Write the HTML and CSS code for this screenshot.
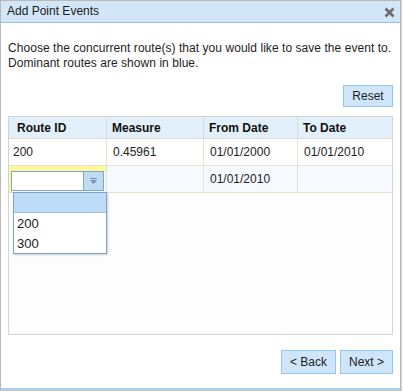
FILE: index.html
```html
<!DOCTYPE html>
<html lang="en">
  <head>
    <meta charset="UTF-8" />
    <title>Add Point Events</title>
    <link rel="stylesheet" href="styles.css">
  </head>
  <body>
    <div class="dialog">
      <div class="titlebar">
        <span class="title">Add Point Events</span>
        <svg class="close" width="11" height="11" viewBox="0 0 11 11">
          <path d="M1.5 1.5 L9.5 9.5 M9.5 1.5 L1.5 9.5" stroke="#6b6b6b" stroke-width="2.6" />
        </svg>
      </div>

      <div class="content">
        <p class="intro">
          Choose the concurrent route(s) that you would like to save the event to.
          Dominant routes are shown in blue.
        </p>

        <div class="toolbar">
          <button class="btn reset">Reset</button>
        </div>

        <div class="grid">
          <div class="row header">
            <div class="cell first">Route ID</div>
            <div class="cell">Measure</div>
            <div class="cell">From Date</div>
            <div class="cell">To Date</div>
          </div>
          <div class="row">
            <div class="cell first">200</div>
            <div class="cell">0.45961</div>
            <div class="cell">01/01/2000</div>
            <div class="cell">01/01/2010</div>
          </div>
          <div class="row alt">
            <div class="cell first editing">
              <div class="combo">
                <div class="combo-input"></div>
                <div class="combo-arrow">
                  <svg width="9" height="7" viewBox="0 0 9 7">
                    <rect x="1" y="0" width="7" height="1" fill="#7591ad" />
                    <path d="M1 2 L8 2 L4.5 6 Z" fill="#7591ad" />
                  </svg>
                </div>
              </div>
              <!-- open dropdown list -->
              <ul class="dropdown">
                <li class="selected">&nbsp;</li>
                <li>200</li>
                <li>300</li>
              </ul>
            </div>
            <div class="cell"></div>
            <div class="cell">01/01/2010</div>
            <div class="cell"></div>
          </div>
        </div>

        <div class="footer">
          <button class="btn back">&lt; Back</button>
          <button class="btn next">Next &gt;</button>
        </div>
      </div>
    </div>
  </body>
</html>
```

FILE: styles.css
```css
:root {
  --text-color: #222;
  --title-bg: #d2e6f8;
  --title-line: #8cc3ef;
  --btn-bg: #cfe5f9;
  --btn-border: #93c7f0;
  --row-line: #e8e0d3;
}
body {
  margin: 0;
  font-family: "Liberation Sans", Arial, sans-serif;
  font-size: 12px;
  color: var(--text-color);
  background: #fff;
}

.dialog {
  width: 399px;
  height: 390px;
  border: 1px solid #b9b9b9;
  border-bottom: none;
  box-shadow: 1px 0 0 #d4d4d4;
  display: flex;
  flex-direction: column;
  position: relative;
}
.dialog::after {
  content: "";
  position: absolute;
  left: 0;
  right: 0;
  bottom: 0;
  height: 2px;
  background: #a9d0f2;
  border-bottom: 1px solid #c8c8c8;
}

.titlebar {
  height: 21px;
  background: var(--title-bg);
  border-bottom: 1px solid var(--title-line);
  display: flex;
  align-items: center;
  justify-content: space-between;
  padding: 0 5px 0 6px;
}
.title {
  font-size: 12px;
  line-height: 15px;
  color: #1c1c1c;
}
.close {
  display: block;
  margin-top: 1px;
}

.content {
  flex: 1;
  display: flex;
  flex-direction: column;
  padding: 18px 7px 0 7px;
}
.intro {
  margin: 0;
  line-height: 15px;
  color: #1e1e1e;
  letter-spacing: 0.05px;
}

.toolbar {
  display: flex;
  justify-content: flex-end;
  margin-top: 14px;
}
.btn {
  font-family: "Liberation Sans", Arial, sans-serif;
  font-size: 12px;
  color: #1e1e1e;
  background: var(--btn-bg);
  border: 1px solid var(--btn-border);
  border-radius: 0;
  height: 22px;
  padding: 0;
  margin: 0;
}
.btn.reset {
  width: 50px;
}

.grid {
  margin-top: 9px;
  height: 217px;
  border: 1px solid #d3d3d3;
  background: #fdfdfd;
}
.row {
  display: grid;
  grid-template-columns: 98px 97px 94px 96px;
  height: 26px;
  background: #fff;
  border-bottom: 1px solid var(--row-line);
}
.row.header {
  height: 21px;
  background: #e2f0fb;
  font-weight: bold;
  color: #111;
  border-bottom: 1px solid #e2ddd3;
}
.row.alt {
  background: #f6faff;
}
.cell {
  display: flex;
  align-items: center;
  padding: 0 6px;
  border-right: 1px solid var(--row-line);
  white-space: nowrap;
  position: relative;
}
.header .cell {
  border-right-color: #dcdcd6;
  padding-left: 5px;
}
.cell.first {
  padding-left: 4px;
}
.header .cell.first {
  padding-left: 8px;
}
.cell:last-child {
  border-right: none;
}

.cell.editing {
  padding: 5px 0 0 2px;
  align-items: flex-start;
  background: linear-gradient(#fdf89c, #fdf89c) left top / 100% 6px no-repeat,
    linear-gradient(#fdf89c, #fdf89c) left top / 3px 100% no-repeat;
}
.combo {
  display: flex;
  width: 93px;
  height: 20px;
  box-sizing: border-box;
  border: 1px solid #7fa8cf;
  background: #fff;
}
.combo-input {
  flex: 1;
}
.combo-arrow {
  width: 19px;
  background: #bfdcf5;
  border-left: 1px solid #7fa8cf;
  display: flex;
  align-items: center;
  justify-content: center;
}
.combo-arrow svg {
  display: block;
}

.dropdown {
  position: absolute;
  top: 26px;
  left: 4px;
  width: 92px;
  margin: 0;
  padding: 0;
  list-style: none;
  background: #fff;
  border: 1px solid #7ea2c4;
  box-shadow: 1px 1px 2px rgba(0, 0, 0, 0.2);
  font-size: 13px;
  font-weight: normal;
  z-index: 10;
}
.dropdown li {
  height: 20px;
  line-height: 21px;
  padding-left: 3px;
  color: #1a1a1a;
}
.dropdown li.selected {
  background: #bcdcf7;
  border-bottom: 1px solid #9fc3e3;
  height: 19px;
}

.footer {
  display: flex;
  justify-content: flex-end;
  gap: 4px;
  margin-top: 15px;
}
.footer .btn {
  height: 24px;
}
.btn.back {
  width: 55px;
}
.btn.next {
  width: 53px;
}
```
